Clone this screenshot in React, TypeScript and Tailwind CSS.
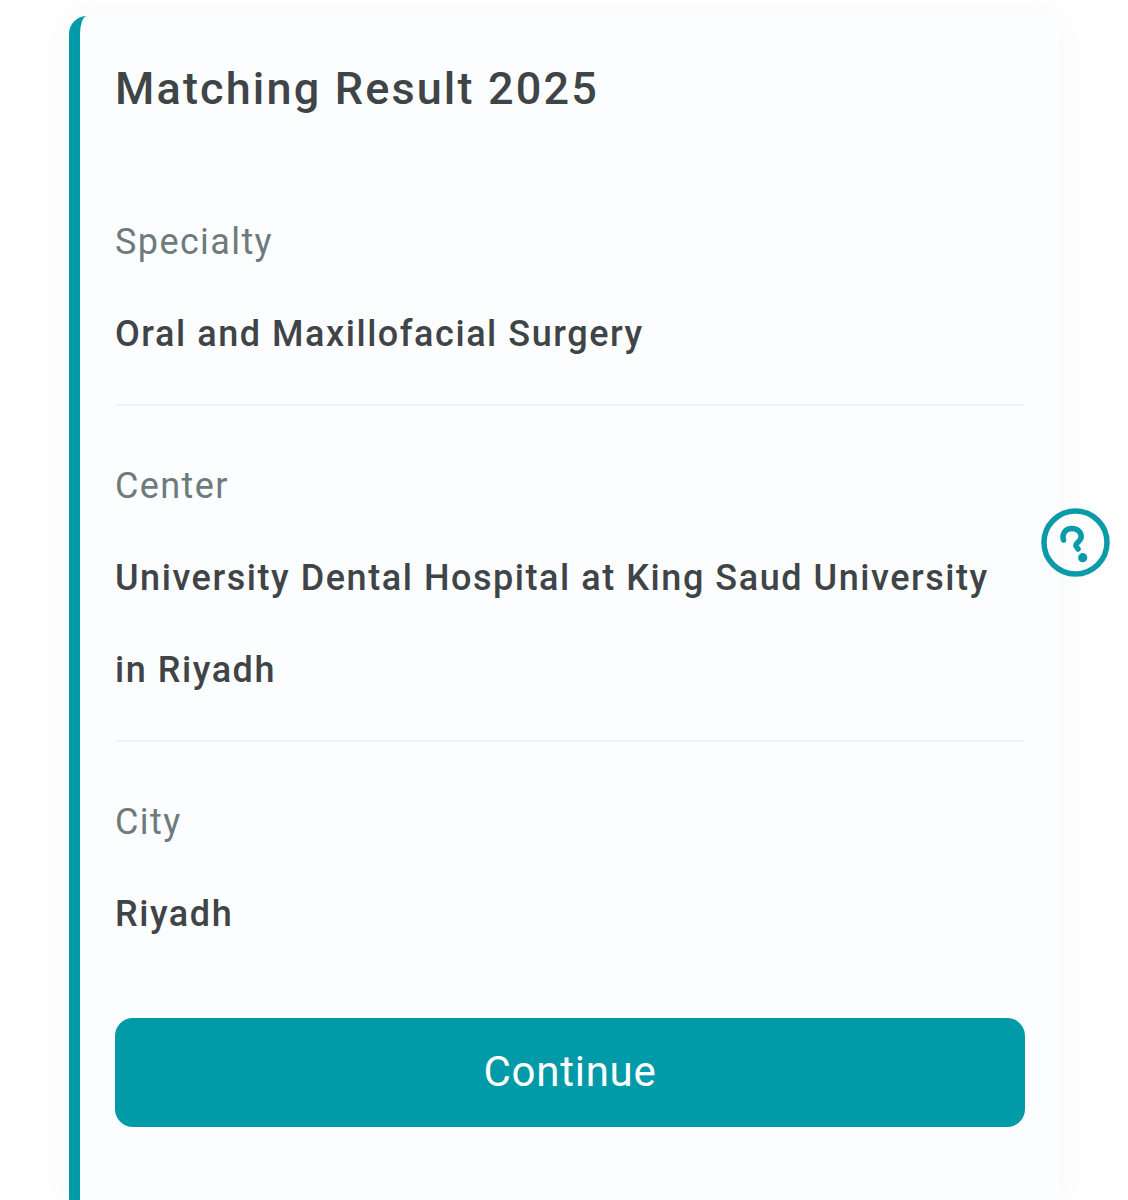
const fields = [
  { label: "Specialty", value: "Oral and Maxillofacial Surgery" },
  { label: "Center", value: "University Dental Hospital at King Saud University in Riyadh" },
  { label: "City", value: "Riyadh" },
];

const HelpIcon = () => (
  <svg width="70" height="70" viewBox="0 0 70 70" fill="none" className="text-[#0a9aa8]">
    <circle cx="34.5" cy="34.5" r="31.5" stroke="currentColor" strokeWidth="5.5" />
    <path
      d="M22.5 32 C20.5 25 25 20.5 31 20.5 C37 20.5 41 25 40 30 C39 34 34 35 35 38 L37 41"
      stroke="currentColor"
      strokeWidth="5.5"
      strokeLinecap="round"
      strokeLinejoin="round"
    />
    <circle cx="41.7" cy="49.7" r="4.6" fill="currentColor" />
  </svg>
);

export default function App() {
  return (
    <div className="relative h-[1200px] overflow-hidden bg-[#fefefe] font-['Roboto',sans-serif]">
      <div className="ml-[69px] mt-[16px] h-[1184px] w-[990px] rounded-t-[18px] border-l-[11px] border-[#009aa8] bg-[#fcfdfe] pl-[35px] pr-[34px] pt-[45px] shadow-[0_0_30px_rgba(0,0,0,0.03)]">
        <h1 className="text-[45px] leading-[56px] font-medium tracking-[2.15px] text-[#3f4446]">
          Matching Result 2025
        </h1>
        <div className="mt-[79px] flex flex-col">
          {fields.map((field, i) => (
            <div
              key={field.label}
              className={i < fields.length - 1 ? "mb-[34px] border-b-2 border-[#f1f3f5] pb-[24px]" : ""}
            >
              <div className="text-[36px] leading-[92px] tracking-[1.4px] text-[#6d7b7c]">{field.label}</div>
              <div className="text-[36px] leading-[92px] font-medium tracking-[1.55px] text-[#3f4446]">
                {field.value}
              </div>
            </div>
          ))}
        </div>
        <button className="mt-[58px] flex h-[109px] w-full items-center justify-center rounded-[18px] bg-[#009aa8] pb-[2px] text-[42px] tracking-[0.75px] text-white">
          Continue
        </button>
      </div>
      <div className="absolute left-[1041px] top-[508px]">
        <HelpIcon />
      </div>
    </div>
  );
}
